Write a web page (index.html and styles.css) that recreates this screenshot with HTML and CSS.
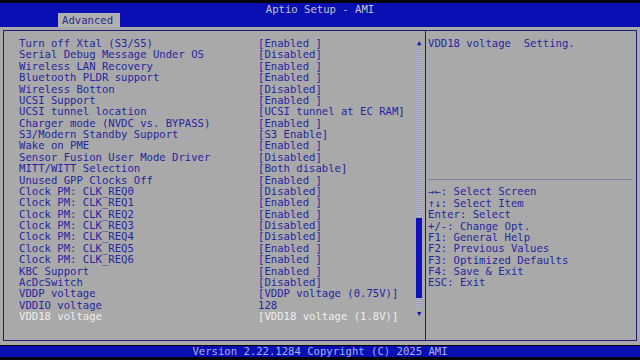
FILE: index.html
```html
<!DOCTYPE html>
<html lang="en">
<head>
  <meta charset="UTF-8">
  <title>Aptio Setup - AMI</title>
  <link rel="stylesheet" href="styles.css">
</head>
<body>
  <div class="screen">
    <div class="top-strip"></div>
    <div class="header">
      <div class="title">Aptio Setup - AMI</div>
      <div class="tabs"><span class="tab">Advanced</span></div>
    </div>

    <div class="main">
      <div class="panel">
        <div class="left">
          <div class="list">
            <div class="row"><span class="label">Turn off Xtal (S3/S5)</span><span class="value">[Enabled ]</span></div>
            <div class="row"><span class="label">Serial Debug Message Under OS</span><span class="value">[Disabled]</span></div>
            <div class="row"><span class="label">Wireless LAN Recovery</span><span class="value">[Enabled ]</span></div>
            <div class="row"><span class="label">Bluetooth PLDR support</span><span class="value">[Enabled ]</span></div>
            <div class="row"><span class="label">Wireless Botton</span><span class="value">[Disabled]</span></div>
            <div class="row"><span class="label">UCSI Support</span><span class="value">[Enabled ]</span></div>
            <div class="row"><span class="label">UCSI tunnel location</span><span class="value">[UCSI tunnel at EC RAM]</span></div>
            <div class="row"><span class="label">Charger mode (NVDC vs. BYPASS)</span><span class="value">[Enabled ]</span></div>
            <div class="row"><span class="label">S3/Modern Standby Support</span><span class="value">[S3 Enable]</span></div>
            <div class="row"><span class="label">Wake on PME</span><span class="value">[Enabled ]</span></div>
            <div class="row"><span class="label">Sensor Fusion User Mode Driver</span><span class="value">[Disabled]</span></div>
            <div class="row"><span class="label">MITT/WITT Selection</span><span class="value">[Both disable]</span></div>
            <div class="row"><span class="label">Unused GPP Clocks Off</span><span class="value">[Enabled ]</span></div>
            <div class="row"><span class="label">Clock PM: CLK_REQ0</span><span class="value">[Disabled]</span></div>
            <div class="row"><span class="label">Clock PM: CLK_REQ1</span><span class="value">[Enabled ]</span></div>
            <div class="row"><span class="label">Clock PM: CLK_REQ2</span><span class="value">[Enabled ]</span></div>
            <div class="row"><span class="label">Clock PM: CLK_REQ3</span><span class="value">[Disabled]</span></div>
            <div class="row"><span class="label">Clock PM: CLK_REQ4</span><span class="value">[Disabled]</span></div>
            <div class="row"><span class="label">Clock PM: CLK_REQ5</span><span class="value">[Enabled ]</span></div>
            <div class="row"><span class="label">Clock PM: CLK_REQ6</span><span class="value">[Enabled ]</span></div>
            <div class="row"><span class="label">KBC Support</span><span class="value">[Enabled ]</span></div>
            <div class="row"><span class="label">AcDcSwitch</span><span class="value">[Disabled]</span></div>
            <div class="row"><span class="label">VDDP voltage</span><span class="value">[VDDP voltage (0.75V)]</span></div>
            <div class="row"><span class="label">VDDIO voltage</span><span class="value">128</span></div>
            <div class="row selected"><span class="label">VDD18 voltage</span><span class="value">[VDD18 voltage (1.8V)]</span></div>
          </div>
          <div class="scrollbar">
            <span class="arrow">&#9650;</span>
            <div class="track"><div class="thumb"></div></div>
            <span class="arrow">&#9660;</span>
          </div>
        </div>

        <div class="right">
          <div class="help-text">VDD18 voltage  Setting.</div>
          <div class="keys">
            <div>&#8594;&#8592;: Select Screen</div>
            <div>&#8593;&#8595;: Select Item</div>
            <div>Enter: Select</div>
            <div>+/-: Change Opt.</div>
            <div>F1: General Help</div>
            <div>F2: Previous Values</div>
            <div>F3: Optimized Defaults</div>
            <div>F4: Save &amp; Exit</div>
            <div>ESC: Exit</div>
          </div>
        </div>
      </div>
    </div>

    <div class="footer">Version 2.22.1284 Copyright (C) 2025 AMI</div>
    <div class="bottom-strip"></div>
  </div>
</body>
</html>
```

FILE: styles.css
```css
body {
  margin: 0;
  background: #000;
  font-family: "DejaVu Sans Mono", "Liberation Mono", monospace;
  font-size: 10.6px;
}
.screen {
  width: 640px;
  height: 360px;
  display: flex;
  flex-direction: column;
  overflow: hidden;
}
.top-strip {
  height: 3px;
  background: #000;
}
.header {
  height: 24px;
  background: #0a0fb4;
  display: flex;
  flex-direction: column;
}
.title {
  color: #c4c4c4;
  text-align: center;
  line-height: 12px;
}
.tabs {
  padding-left: 58px;
  margin-top: -2px;
}
.tab {
  display: inline-block;
  background: #b0b0b0;
  color: #2a2a8a;
  padding: 0 4px;
  width: 54px;
  height: 14px;
  line-height: 15px;
}
.main {
  height: 318px;
  background: #a9a9a9;
  padding: 3px 3px 0 3px;
  box-sizing: border-box;
}
.panel {
  height: 309px;
  border: 1px solid #1e1e78;
  display: flex;
}
.left {
  width: 421px;
  border-right: 1px solid #1e1e78;
  display: flex;
}
.list {
  width: 397px;
  padding: 7px 0 0 15px;
}
.row {
  display: flex;
  height: 11.375px;
  line-height: 11.375px;
  color: #2626a0;
  white-space: pre;
}
.row .label {
  width: 239px;
}
.row.selected {
  color: #eeeeee;
}
.scrollbar {
  width: 6px;
  padding-top: 8px;
  display: flex;
  flex-direction: column;
  align-items: center;
}
.arrow {
  color: #1414b4;
  font-size: 7px;
  line-height: 8px;
  height: 8px;
}
.track {
  width: 6px;
  height: 260px;
  margin: 2px 0 1px;
  background: repeating-linear-gradient(#9c9cbc 0, #9c9cbc 1px, #b4b4c8 1px, #b4b4c8 2px);
}
.thumb {
  margin-top: 169px;
  height: 80px;
  background: #1010c0;
}
.right {
  flex: 1;
  padding-left: 2px;
  display: flex;
  flex-direction: column;
  color: #2626a0;
}
.help-text {
  white-space: pre;
  padding-top: 7px;
  line-height: 11.375px;
}
.keys {
  margin-top: 130px;
  margin-right: 4px;
  border-top: 1px solid #8080a8;
  padding-top: 6px;
  line-height: 11.375px;
}
.footer {
  height: 11px;
  background: #0a0fb4;
  color: #a8b0e0;
  text-align: center;
  line-height: 11px;
  margin-top: 1px;
}
.bottom-strip {
  flex: 1;
  background: #000;
}
```
